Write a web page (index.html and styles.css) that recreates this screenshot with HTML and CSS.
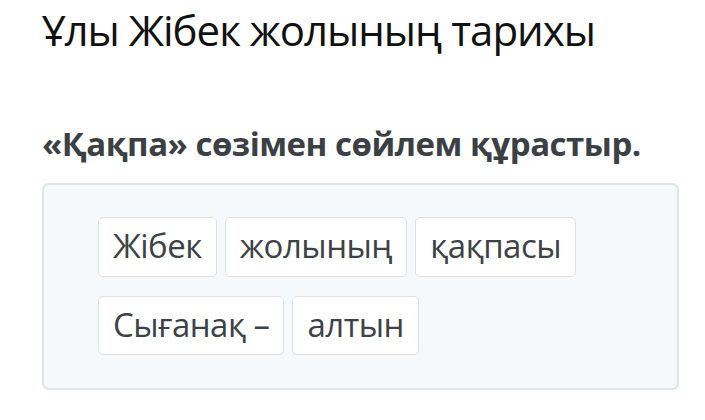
FILE: index.html
```html
<!DOCTYPE html>
<html lang="kk">
<head>
<meta charset="utf-8">
<link rel="stylesheet" href="styles.css">
</head>
<body>
<div class="page">
  <h1 class="title">Ұлы Жібек жолының тарихы</h1>
  <h2 class="task">«Қақпа» сөзімен сөйлем құрастыр.</h2>
  <div class="board">
    <div class="chips">
      <span class="chip">Жібек</span>
      <span class="chip">жолының</span>
      <span class="chip">қақпасы</span>
      <span class="chip">Сығанақ –</span>
      <span class="chip">алтын</span>
    </div>
  </div>
</div>
</body>
</html>
```
FILE: styles.css
```css
html, body {
  margin: 0;
  padding: 0;
  background: #ffffff;
}
.page {
  width: 705px;
  height: 420px;
  padding: 0 26px 0 42px;
  box-sizing: border-box;
  font-family: "Open Sans", "Noto Sans", sans-serif;
  overflow: hidden;
}
.title {
  margin: 0;
  padding-top: 4px;
  font-size: 42px;
  font-weight: 400;
  line-height: 52px;
  color: #111111;
  letter-spacing: -1px;
}
.task {
  margin: 66px 0 0 0;
  font-size: 33px;
  font-weight: 700;
  line-height: 44px;
  color: #3b4045;
  letter-spacing: -0.5px;
}
.board {
  margin-top: 17px;
  height: 207px;
  box-sizing: border-box;
  border: 2px solid #dfe4e8;
  border-radius: 7px;
  background: #f5f9fb;
  padding: 32px 40px 0 54px;
}
.chips {
  display: flex;
  flex-wrap: wrap;
  column-gap: 8px;
  row-gap: 19px;
  width: 490px;
}
.chip {
  display: block;
  height: 60px;
  box-sizing: border-box;
  padding: 0 14px;
  border: 1px solid #dde1e5;
  border-radius: 5px;
  background: #ffffff;
  color: #3d4246;
  font-size: 33px;
  line-height: 56px;
  letter-spacing: -0.5px;
}
.chip:nth-child(n+4) {
  height: 59px;
}
```
